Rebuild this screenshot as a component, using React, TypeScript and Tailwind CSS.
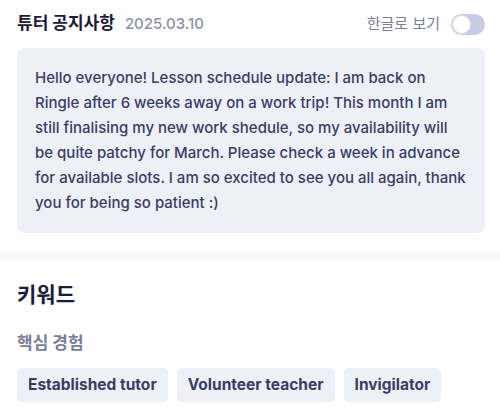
export default function App() {
  return (
    <div className="w-[500px] h-[411px] overflow-hidden bg-white font-['Inter','Noto_Sans_CJK_KR',sans-serif]">
      {/* Notice */}
      <section className="px-[15px] pt-[10px]">
        <div className="flex items-center justify-between h-[28px] pl-[2px]">
          <div className="flex items-center gap-[10px]">
            <h2 className="text-[17px] font-bold text-[#1b1b3a]">튜터 공지사항</h2>
            <span className="text-[15px] font-medium text-[#8d8fab]">2025.03.10</span>
          </div>
          <div className="flex items-center gap-[11px]">
            <span className="text-[15px] text-[#7c7e99]">한글로 보기</span>
            <button className="relative w-[34px] h-[21px] rounded-full bg-[#c9cbe4]">
              <span className="absolute left-[1px] top-[1px] w-[19px] h-[19px] rounded-full bg-white border border-[#dcdeee]" />
            </button>
          </div>
        </div>
        <div className="mt-[10px] ml-[2px] rounded-[8px] bg-[#eef0f8] px-[18px] pt-[17px] pb-[18px]">
          <p className="text-[15px] leading-[25px] font-medium text-[#3a3c66]">
            Hello everyone! Lesson schedule update: I am back on Ringle after 6 weeks away on a work trip! This month I am still finalising my new work shedule, so my availability will be quite patchy for March. Please check a week in advance for available slots. I am so excited to see you all again, thank you for being so patient :)
          </p>
        </div>
      </section>

      <div className="mt-[19px] h-[8px] bg-[#f8f9fd]" />

      {/* Keywords */}
      <section className="px-[17px] pt-[20px]">
        <h2 className="text-[21px] font-bold text-[#1b1b3a] leading-[30px]">키워드</h2>
        <h3 className="mt-[21px] text-[17px] font-bold text-[#7c7e99] leading-[24px]">핵심 경험</h3>
        <div className="mt-[13px] flex flex-wrap gap-[9px]">
          {["Established tutor", "Volunteer teacher", "Invigilator"].map((k) => (
            <span
              key={k}
              className="h-[34px] px-[11px] flex items-center rounded-[5px] bg-[#eef0f8] text-[15.5px] font-bold text-[#3a3c66]"
            >
              {k}
            </span>
          ))}
        </div>
      </section>
    </div>
  );
}
